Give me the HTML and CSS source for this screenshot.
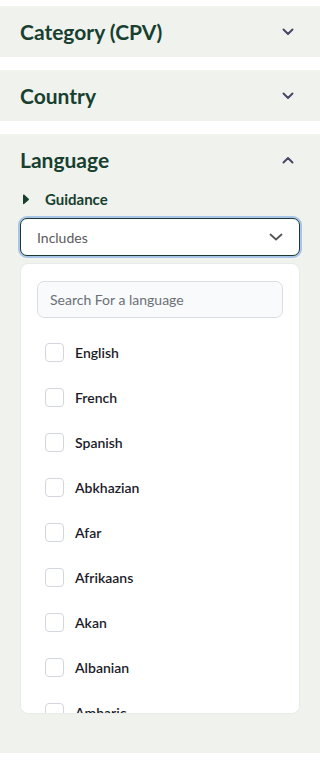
FILE: index.html
```html
<!DOCTYPE html>
<html lang="en">

<head>
    <meta charset="UTF-8">
    <meta name="viewport" content="width=device-width, initial-scale=1.0">
    <title>Filters</title>
    <link rel="stylesheet" href="styles.css">
</head>

<body>
    <div class="filter">
        <div class="filter-head">
            <h2 class="filter-title">Category (CPV)</h2>
            <svg class="chevron" width="12" height="8" viewBox="0 0 12 8"><path d="M1.5 1.5 6 6l4.5-4.5" fill="none" stroke="#4a4866" stroke-width="2" stroke-linecap="round" stroke-linejoin="round"/></svg>
        </div>
    </div>

    <div class="filter">
        <div class="filter-head">
            <h2 class="filter-title">Country</h2>
            <svg class="chevron" width="12" height="8" viewBox="0 0 12 8"><path d="M1.5 1.5 6 6l4.5-4.5" fill="none" stroke="#4a4866" stroke-width="2" stroke-linecap="round" stroke-linejoin="round"/></svg>
        </div>
    </div>

    <div class="filter open">
        <div class="filter-head">
            <h2 class="filter-title">Language</h2>
            <svg class="chevron" width="12" height="8" viewBox="0 0 12 8"><path d="M1.5 6.5 6 2l4.5 4.5" fill="none" stroke="#4a4866" stroke-width="2" stroke-linecap="round" stroke-linejoin="round"/></svg>
        </div>

        <div class="guidance">
            <svg width="8" height="11" viewBox="0 0 8 11"><path d="M1 1.2c0-.6.6-.9 1.1-.6l4.6 4.1c.4.4.4.9 0 1.3L2.1 10.1c-.5.4-1.1.1-1.1-.5z" fill="#17402f"/></svg>
            <span>Guidance</span>
        </div>

        <div class="select">
            <span>Includes</span>
            <svg width="14" height="8" viewBox="0 0 14 8"><path d="M1.5 1.5 7 6.5l5.5-5" fill="none" stroke="#555" stroke-width="1.8" stroke-linecap="round" stroke-linejoin="round"/></svg>
        </div>

        <div class="dropdown">
            <input class="search" type="text" placeholder="Search For a language">
            <ul class="options">
                <li><span class="box"></span>English</li>
                <li><span class="box"></span>French</li>
                <li><span class="box"></span>Spanish</li>
                <li><span class="box"></span>Abkhazian</li>
                <li><span class="box"></span>Afar</li>
                <li><span class="box"></span>Afrikaans</li>
                <li><span class="box"></span>Akan</li>
                <li><span class="box"></span>Albanian</li>
                <li><span class="box"></span>Amharic</li>
            </ul>
        </div>
    </div>
</body>

</html>
```

FILE: styles.css
```css
body {
    margin: 0;
    padding-top: 6px;
    background: #fff;
    font-family: "Lato", "Noto Sans", sans-serif;
}

.filter {
    background-color: #f0f2ee;
    margin-bottom: 13px;
}

.filter.open {
    padding-bottom: 40px;
}

.filter-head {
    display: flex;
    justify-content: space-between;
    align-items: center;
    height: 51px;
    padding: 0 26px 0 20px;
}

.filter-title {
    margin: 0;
    font-size: 21px;
    font-weight: 700;
    color: #17402f;
}

.chevron {
    display: block;
}

.guidance {
    display: flex;
    align-items: center;
    gap: 15px;
    padding: 2px 20px 0 22px;
    height: 24px;
    font-size: 15px;
    font-weight: 700;
    color: #17402f;
}

.select {
    display: flex;
    justify-content: space-between;
    align-items: center;
    margin: 7px 20px 0;
    height: 36px;
    padding: 0 16px;
    background: #fff;
    border: 1px solid #1c3a33;
    border-radius: 7px;
    box-shadow: 0 0 0 2px #a8c4e6;
    font-size: 14px;
    color: #5a5a5a;
}

.dropdown {
    margin: 8px 21px 0;
    height: 449px;
    overflow: hidden;
    background: #fff;
    border-radius: 7px;
    box-shadow: 0 0 0 1px #e8ebe8;
    padding: 17px 16px 0;
    box-sizing: border-box;
}

.search {
    display: block;
    width: 100%;
    height: 37px;
    box-sizing: border-box;
    padding: 0 12px;
    border: 1px solid #d9dee4;
    border-radius: 7px;
    background: #f8fafc;
    font-family: inherit;
    font-size: 14px;
}

.search::placeholder {
    color: #6b6f76;
}

.options {
    list-style: none;
    margin: 12px 0 0;
    padding: 0 0 0 8px;
}

.options li {
    display: flex;
    align-items: center;
    gap: 11px;
    height: 45px;
    font-size: 14px;
    font-weight: 600;
    color: #1b1b28;
}

.box {
    width: 17px;
    height: 17px;
    border: 1px solid #d3d6dc;
    border-radius: 4px;
    background: #fff;
}
```
